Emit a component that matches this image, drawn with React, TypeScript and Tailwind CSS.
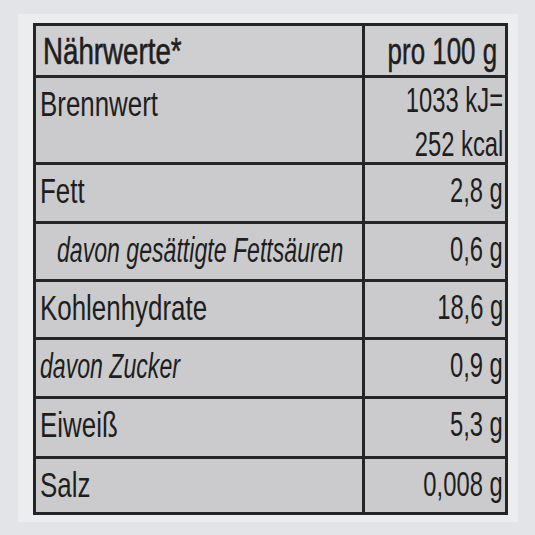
import { Fragment } from "react"

// Liberation Sans squeezed horizontally to get the condensed label face
const rows = [
  { label: "Brennwert", value: ["1033 kJ=", "252 kcal"] },
  { label: "Fett", value: ["2,8 g"] },
  { label: "davon gesättigte Fettsäuren", value: ["0,6 g"], italic: true, indent: true },
  { label: "Kohlenhydrate", value: ["18,6 g"] },
  { label: "davon Zucker", value: ["0,9 g"], italic: true },
  { label: "Eiweiß", value: ["5,3 g"] },
  { label: "Salz", value: ["0,008 g"] },
]

export default function App() {
  return (
    <div
      className="w-[535px] h-[535px] bg-[#e3e4e8] pt-[14px] pl-[18px] overflow-hidden text-[#1e1e1e]"
      style={{ fontFamily: '"Liberation Sans", Arial, sans-serif' }}
    >
      <div className="w-[500px] h-[508px] bg-[#ecedef] pt-[9px] pl-[15px]">
        <div className="w-[475px] h-[492px] bg-[#252525] p-[3px] grid grid-cols-[326px_140px] grid-rows-[49px_84px_56px_55px_55px_56px_57px_53px] gap-[3px] text-[35px] leading-[40px]">
          <div className="bg-[#cfcfd1] pl-[7px] pt-[6px] text-[36px] overflow-hidden">
            <span className="inline-block whitespace-nowrap origin-left scale-x-[0.77] [-webkit-text-stroke:0.6px_#1e1e1e]">
              Nährwerte*
            </span>
          </div>
          <div className="bg-[#cfcfd1] pr-[8px] pt-[6px] text-[36px] flex flex-col items-end overflow-hidden">
            <span className="inline-block whitespace-nowrap origin-right scale-x-[0.72] [-webkit-text-stroke:0.5px_#1e1e1e]">
              pro 100 g
            </span>
          </div>
          {rows.map((r) => (
            <Fragment key={r.label}>
              <div
                className={
                  "bg-[#cbcbcd] pt-[6px] overflow-hidden " +
                  (r.indent ? "pl-[21px]" : "pl-[4px]")
                }
              >
                <span
                  className={
                    "inline-block whitespace-nowrap origin-left " +
                    (r.italic ? "italic scale-x-[0.66]" : "scale-x-[0.74]")
                  }
                >
                  {r.label}
                </span>
              </div>
              <div
                className={
                  "bg-[#cbcbcd] pr-[2px] flex flex-col items-end " +
                  (r.value.length > 1 ? "pt-0 leading-[44px]" : "pt-[2px] leading-[46px]")
                }
              >
                {r.value.map((v) => (
                  <span key={v} className="inline-block whitespace-nowrap origin-right scale-x-[0.68]">
                    {v}
                  </span>
                ))}
              </div>
            </Fragment>
          ))}
        </div>
      </div>
    </div>
  )
}
